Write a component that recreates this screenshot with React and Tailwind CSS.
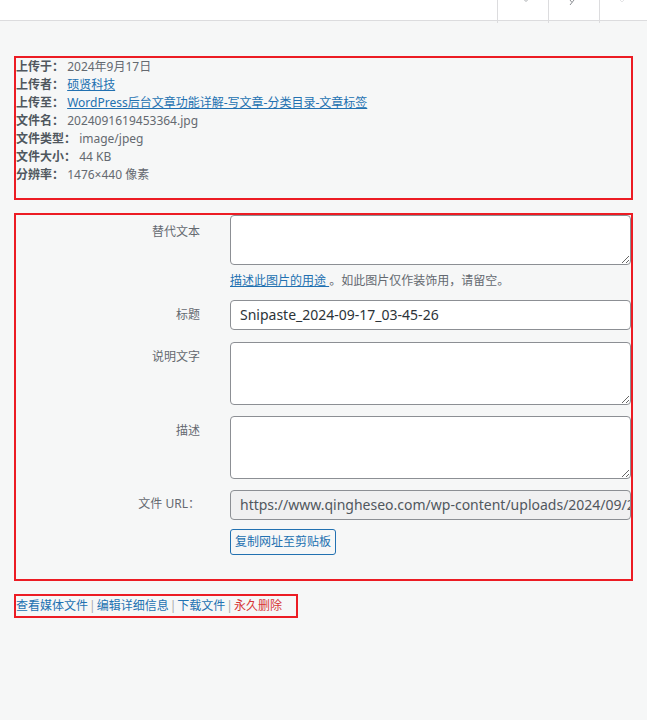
import React from "react";

function Row({ label, children, labelPt = "pt-[7px]" }) {
  return (
    <div className="flex">
      <div className={`w-[184px] shrink-0 text-right text-[12px] leading-[18px] text-[#646970] ${labelPt}`}>
        {label}
      </div>
      <div className="ml-[30px] w-[401px]">{children}</div>
    </div>
  );
}

function Meta({ label, children }) {
  return (
    <div className="text-[12px] leading-[18px] text-[#646970] whitespace-nowrap">
      <span className="font-bold text-[#50575e]">{label}：</span> {children}
    </div>
  );
}

function Sep() {
  return <span className="text-[#a7aaad] mx-[1px]">|</span>;
}

export default function App() {
  return (
    <div className="min-h-[720px] bg-[#f6f7f7] font-['Noto_Sans','Noto_Sans_CJK_SC',sans-serif]">
      <div className="h-[21px] bg-white border-b border-[#dcdcde] flex justify-end">
        <div className="w-[51px] h-[23px] border-l border-[#dcdcde] relative overflow-hidden">
          <svg width="6" height="4" viewBox="0 0 6 4" className="absolute left-[25px] top-0">
            <path d="M1.5 0 L3 1.5 L4.5 0" stroke="#a7aaad" strokeWidth="1" fill="none" />
          </svg>
        </div>
        <div className="w-[51px] h-[23px] border-l border-[#dcdcde] relative overflow-hidden">
          <svg width="8" height="6" viewBox="0 0 8 6" className="absolute left-[19px] top-0">
            <path d="M2 0 L4 2.5 L2 5 M6 0 L4 2.5" stroke="#8c8f94" strokeWidth="1" fill="none" />
          </svg>
        </div>
        <div className="w-[48px] h-[23px] border-l border-[#dcdcde] relative overflow-hidden">
          <svg width="8" height="4" viewBox="0 0 8 4" className="absolute left-[18px] top-0">
            <path d="M2 0 L4 2 L6 0" stroke="#e4e4e6" strokeWidth="1" fill="none" />
          </svg>
        </div>
      </div>

      <div className="px-[14px] pt-[35px]">
        <div className="w-[619px] h-[144px] border-2 border-[#ec1c24]">
          <Meta label="上传于">2024年9月17日</Meta>
          <Meta label="上传者">
            <a className="text-[#2271b1] underline">硕贤科技</a>
          </Meta>
          <Meta label="上传至">
            <a className="text-[#2271b1] underline">WordPress后台文章功能详解-写文章-分类目录-文章标签</a>
          </Meta>
          <Meta label="文件名">2024091619453364.jpg</Meta>
          <Meta label="文件类型">image/jpeg</Meta>
          <Meta label="文件大小">44 KB</Meta>
          <Meta label="分辨率">1476×440 像素</Meta>
        </div>

        <div className="mt-[13px] w-[619px] h-[368px] border-2 border-[#ec1c24] flex flex-col">
          <Row label="替代文本" labelPt="pt-[8px]">
            <textarea className="block w-[401px] h-[50px] bg-white border border-[#8c8f94] rounded-[4px]" />
            <p className="mt-[7px] text-[12px] leading-[18px] text-[#646970] whitespace-nowrap">
              <a className="text-[#2271b1] underline">描述此图片的用途 </a>。如此图片仅作装饰用，请留空。
            </p>
          </Row>
          <div className="mt-[10px]">
            <Row label="标题" labelPt="pt-[6px]">
              <div className="w-[401px] h-[30px] bg-white border border-[#8c8f94] rounded-[4px] px-[9px] text-[14px] leading-[28px] text-[#2c3338]">
                Snipaste_2024-09-17_03-45-26
              </div>
            </Row>
          </div>
          <div className="mt-[12px]">
            <Row label="说明文字" labelPt="pt-[6px]">
              <textarea className="block w-[401px] h-[63px] bg-white border border-[#8c8f94] rounded-[4px]" />
            </Row>
          </div>
          <div className="mt-[11px]">
            <Row label="描述" labelPt="pt-[6px]">
              <textarea className="block w-[401px] h-[63px] bg-white border border-[#8c8f94] rounded-[4px]" />
            </Row>
          </div>
          <div className="mt-[11px]">
            <Row label="文件 URL：" labelPt="pt-[5px]">
              <div className="w-[401px] h-[30px] bg-[#f0f0f1] border border-[#8c8f94] rounded-[4px] px-[9px] text-[14px] leading-[28px] text-[#50575e] overflow-hidden whitespace-nowrap">
                https://www.qingheseo.com/wp-content/uploads/2024/09/20
              </div>
            </Row>
          </div>
          <div className="mt-[9px]">
            <Row label="" labelPt="pt-0">
              <button className="block h-[26px] px-[4px] border border-[#2271b1] rounded-[3px] bg-[#f6f7f7] text-[12px] text-[#2271b1] leading-[24px] whitespace-nowrap">
                复制网址至剪贴板
              </button>
            </Row>
          </div>
        </div>

        <div className="mt-[13px] w-[284px] h-[24px] border-2 border-[#ec1c24] text-[12px] leading-[20px] whitespace-nowrap">
          <a className="text-[#2271b1]">查看媒体文件</a>
          <Sep />
          <a className="text-[#2271b1]">编辑详细信息</a>
          <Sep />
          <a className="text-[#2271b1]">下载文件</a>
          <Sep />
          <a className="text-[#d63638]">永久删除</a>
        </div>
      </div>
    </div>
  );
}
